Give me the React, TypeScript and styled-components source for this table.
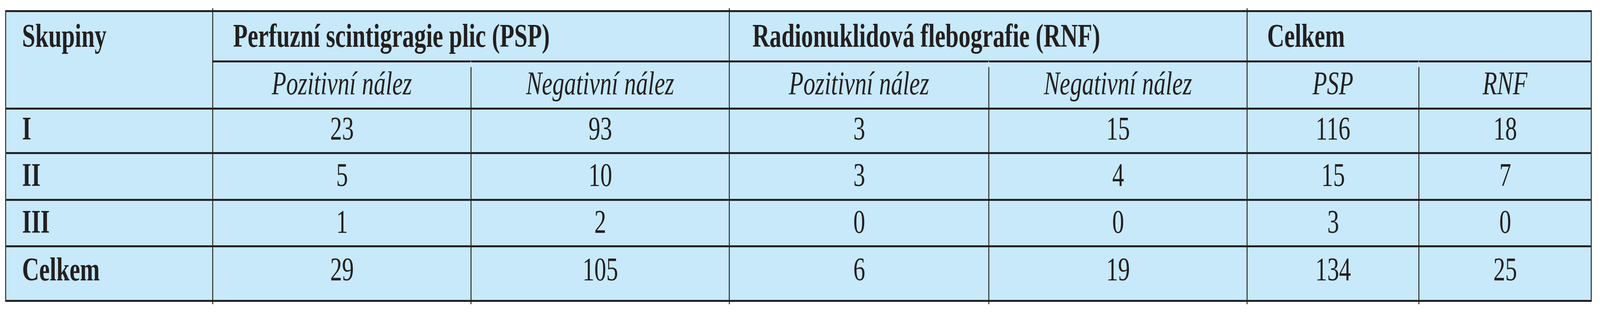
import React, { useEffect, useState } from 'react';
import styled, { createGlobalStyle, css } from 'styled-components';

const INK = '#231f20';
const SKY = '#c7e9fa';
const DESIGN_WIDTH = 5216;

type Divider = 'none' | 'full' | 'gap';
type Align = 'left' | 'center';

interface RowData {
  label: string;
  values: number[];
}

const rows: RowData[] = [
  { label: 'I', values: [23, 93, 3, 15, 116, 18] },
  { label: 'II', values: [5, 10, 3, 4, 15, 7] },
  { label: 'III', values: [1, 2, 0, 0, 3, 0] },
  { label: 'Celkem', values: [29, 105, 6, 19, 134, 25] },
];

// height of each body row (incl. its top rule) and where the text starts
const bodyRowHeights = [114, 120, 119, 140];
const bodyRowPads = [7, 12, 12, 15];

const columnWidths = [672, 842, 842, 846, 842, 560, 562];

const groups = [
  { title: 'Perfuzní scintigragie plic (PSP)', indent: 65 },
  { title: 'Radionuklidová flebografie (RNF)', indent: 74 },
  { title: 'Celkem', indent: 64 },
];

const subHeads = [
  'Pozitivní nález',
  'Negativní nález',
  'Pozitivní nález',
  'Negativní nález',
  'PSP',
  'RNF',
];

const GlobalStyle = createGlobalStyle`
  body {
    margin: 0;
    background: #ffffff;
  }
`;

const Viewport = styled.div`
  width: 100%;
  height: 800px;
  overflow: hidden;
`;

const Sheet = styled.div`
  box-sizing: border-box;
  width: ${DESIGN_WIDTH}px;
  height: 800px;
  padding: 26px 0 0 17px;
  transform-origin: 0 0;
`;

const Table = styled.table`
  border-collapse: separate;
  border-spacing: 0;
  table-layout: fixed;
  width: 5172px;
  border-style: solid;
  border-color: ${INK};
  border-width: 5px 3px;
  background: ${SKY};
  color: ${INK};
  font-family: 'Liberation Serif', 'Times New Roman', serif;
  font-size: 84px;
  line-height: 1;
`;

const Col = styled.col<{ $w: number }>`
  width: ${(p) => p.$w}px;
`;

const Row = styled.tr<{ $h: number }>`
  height: ${(p) => p.$h}px;
`;

const tick = css`
  content: '';
  position: absolute;
  left: -3px;
  width: 3px;
  background: ${INK};
`;

const Cell = styled.td<{
  $pad: number;
  $align: Align;
  $indent?: number;
  $divider: Divider;
  $ruleTop?: boolean;
  $tickUp?: boolean;
  $tickDown?: boolean;
  $weight?: 'bold' | 'normal';
  $italic?: boolean;
}>`
  position: relative;
  box-sizing: border-box;
  vertical-align: top;
  padding: ${(p) => p.$pad}px 0 0 ${(p) => p.$indent ?? 0}px;
  text-align: ${(p) => p.$align};
  font-weight: ${(p) => (p.$weight === 'bold' ? 700 : 400)};
  font-style: ${(p) => (p.$italic ? 'italic' : 'normal')};
  border-top: ${(p) => (p.$ruleTop ? `5px solid ${INK}` : '0')};
  border-left: ${(p) =>
    p.$divider === 'full'
      ? `3px solid ${INK}`
      : p.$divider === 'gap'
      ? '3px solid transparent'
      : '0'};

  ${(p) =>
    p.$divider === 'gap' &&
    css`
      &::before {
        ${tick};
        top: 12px;
        bottom: 0;
      }
    `}

  ${(p) =>
    p.$tickUp &&
    css`
      &::after {
        ${tick};
        top: -10px;
        height: 10px;
      }
    `}

  ${(p) =>
    p.$tickDown &&
    css`
      &::after {
        ${tick};
        top: 100%;
        height: 11px;
      }
    `}
`;

const Text = styled.span<{ $align: Align }>`
  display: inline-block;
  white-space: nowrap;
  transform: scaleX(0.92);
  transform-origin: ${(p) => (p.$align === 'left' ? 'left' : 'center')} center;
`;

function fitScale(): number {
  if (typeof window === 'undefined') return 1;
  return Math.min(1, window.innerWidth / DESIGN_WIDTH);
}

const App: React.FC = () => {
  // the table is laid out for a 5216px wide page; narrower windows squeeze it sideways
  const [scale, setScale] = useState<number>(fitScale);

  useEffect(() => {
    const onResize = () => setScale(fitScale());
    window.addEventListener('resize', onResize);
    return () => window.removeEventListener('resize', onResize);
  }, []);

  return (
    <Viewport>
      <GlobalStyle />
      <Sheet style={{ transform: `scaleX(${scale})` }}>
        <Table>
          <colgroup>
            {columnWidths.map((w, i) => (
              <Col key={i} $w={w} />
            ))}
          </colgroup>
          <thead>
            <Row $h={124}>
              <Cell
                as="th"
                rowSpan={2}
                $pad={19}
                $align="left"
                $indent={52}
                $divider="none"
                $weight="bold"
              >
                <Text $align="left">Skupiny</Text>
              </Cell>
              {groups.map((g) => (
                <Cell
                  as="th"
                  key={g.title}
                  colSpan={2}
                  $pad={19}
                  $align="left"
                  $indent={g.indent}
                  $divider="full"
                  $tickUp
                  $weight="bold"
                >
                  <Text $align="left">{g.title}</Text>
                </Cell>
              ))}
            </Row>
            <Row $h={121}>
              {subHeads.map((s, i) => (
                <Cell
                  as="th"
                  key={i}
                  $pad={12}
                  $align="center"
                  $divider={i % 2 === 0 ? 'full' : 'gap'}
                  $ruleTop
                  $weight="normal"
                  $italic
                >
                  <Text $align="center">{s}</Text>
                </Cell>
              ))}
            </Row>
          </thead>
          <tbody>
            {rows.map((r, ri) => {
              const last = ri === rows.length - 1;
              return (
                <Row key={r.label} $h={bodyRowHeights[ri]}>
                  <Cell
                    $pad={bodyRowPads[ri]}
                    $align="left"
                    $indent={52}
                    $divider="none"
                    $ruleTop
                    $weight="bold"
                  >
                    <Text $align="left">{r.label}</Text>
                  </Cell>
                  {r.values.map((v, vi) => (
                    <Cell
                      key={vi}
                      $pad={bodyRowPads[ri]}
                      $align="center"
                      $divider="full"
                      $ruleTop
                      $tickDown={last}
                    >
                      <Text $align="center">{v}</Text>
                    </Cell>
                  ))}
                </Row>
              );
            })}
          </tbody>
        </Table>
      </Sheet>
    </Viewport>
  );
};

export default App;
